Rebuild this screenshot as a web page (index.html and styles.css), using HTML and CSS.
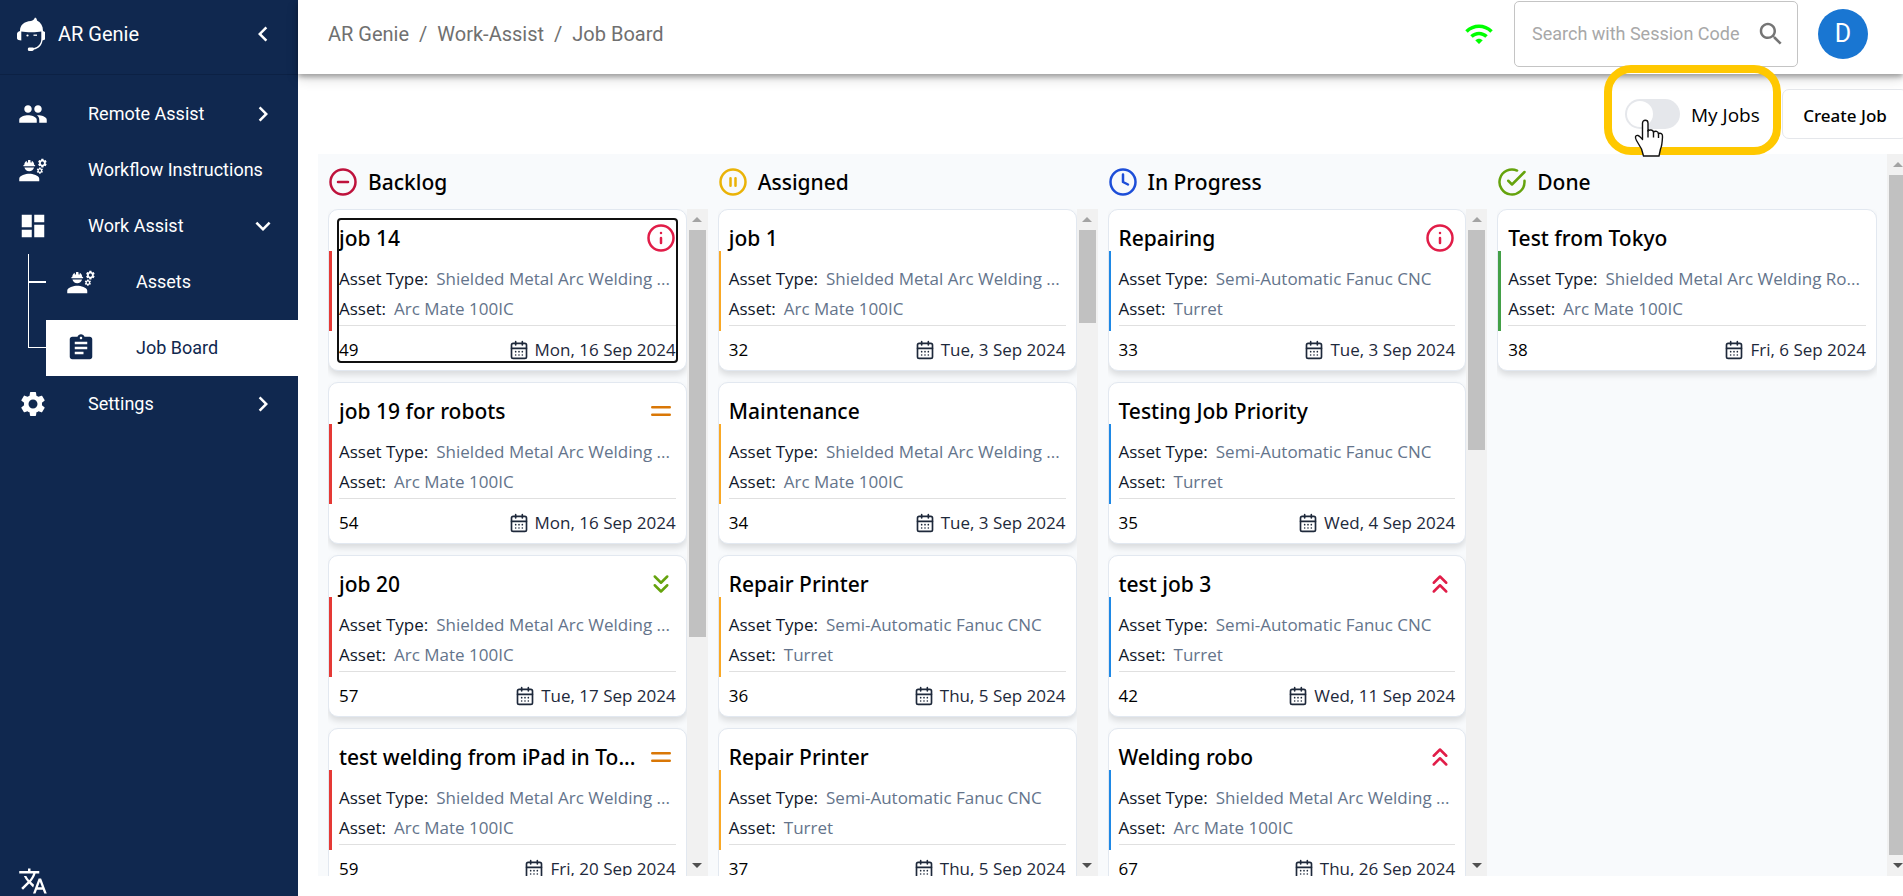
FILE: index.html
```html
<!DOCTYPE html>
<html lang="en">
<head>
<meta charset="utf-8">
<title>AR Genie - Job Board</title>
<link rel="stylesheet" href="styles.css">
</head>
<body>
<svg class="sprite" aria-hidden="true">
  <symbol id="logo" viewBox="0 0 28 34">
    <path fill="currentColor" d="M3 14C3 8 7 4.500 14 4C16 3.500 17.500 2 18 .5C19.500 1 20 2.500 20 3.500C24 5.500 26 9 26 14L28 15V22.500L25.500 23.500C25 28.500 21 32 17 32.500C16.500 34 15.500 34 14 34H12C10.500 34 10.500 30.500 12 30.500H15C16 30.500 16.800 30.700 17 31C21 30 24.200 27 24.300 22V14.500C20 15.500 9 15.500 4.300 14.500V23.500L1.500 23C0 22.500 0 21.500 0 20.500V17C0 15.500 1 14.500 3 14Z"/>
    <circle fill="currentColor" cx="10.500" cy="18.500" r="1.100"/>
    <path stroke="currentColor" stroke-width="1.300" d="M16.500 18.200h3.500"/>
  </symbol>
  <symbol id="people" viewBox="0 0 24 24"><path fill="currentColor" d="M16 11c1.660 0 2.990-1.340 2.990-3S17.660 5 16 5c-1.660 0-3 1.340-3 3s1.340 3 3 3zm-8 0c1.660 0 2.990-1.340 2.990-3S9.660 5 8 5C6.340 5 5 6.340 5 8s1.340 3 3 3zm0 2c-2.330 0-7 1.170-7 3.500V19h14v-2.500c0-2.330-4.670-3.500-7-3.500zm8 0c-.29 0-.62.020-.97.050 1.160.84 1.970 1.970 1.970 3.450V19h6v-2.500c0-2.330-4.670-3.500-7-3.500z"/></symbol>
  <symbol id="engineer" viewBox="0 0 24 24"><path fill="currentColor" d="M9 15c-2.670 0-8 1.340-8 4v2h16v-2c0-2.660-5.330-4-8-4zM22.100 6.840c.01-.11.02-.22.02-.34s-.01-.23-.03-.34l.74-.58c.07-.05.08-.15.04-.22l-.7-1.210c-.04-.08-.14-.1-.21-.08l-.86.35c-.18-.14-.38-.25-.59-.34l-.13-.93c-.02-.09-.09-.15-.18-.15h-1.400c-.09 0-.16.06-.17.15l-.13.93c-.21.09-.41.21-.59.34l-.87-.35c-.08-.03-.17 0-.21.08l-.7 1.210c-.04.08-.03.17.04.22l.74.58c-.02.11-.03.23-.03.34s.01.23.03.34l-.74.58c-.07.05-.08.15-.04.22l.7 1.210c.04.08.14.1.21.08l.87-.35c.18.14.38.25.59.34l.13.93c.01.09.08.15.17.15h1.400c.09 0 .16-.06.17-.15l.13-.93c.21-.09.41-.21.59-.34l.87.35c.08.03.17 0 .21-.08l.7-1.210c.04-.08.03-.17-.04-.22l-.73-.58zm-2.600.91c-.69 0-1.250-.56-1.250-1.250s.56-1.250 1.250-1.250 1.250.56 1.250 1.250-.56 1.250-1.250 1.250zM19.920 11.680l-.5-.87c-.03-.06-.1-.08-.15-.06l-.62.25c-.13-.1-.27-.18-.42-.24l-.09-.66c-.02-.06-.08-.1-.14-.1h-1c-.06 0-.11.04-.12.11l-.09.66c-.15.06-.29.15-.42.24l-.62-.25c-.06-.02-.12 0-.15.06l-.5.87c-.03.06-.02.12.03.16l.53.41c-.01.08-.02.16-.02.24s.01.17.02.24l-.53.41c-.05.04-.06.11-.03.16l.5.87c.03.06.1.08.15.06l.62-.25c.13.1.27.18.42.24l.09.66c.01.07.06.11.12.11h1c.06 0 .12-.04.12-.11l.09-.66c.15-.06.29-.15.42-.24l.62.25c.06.02.12 0 .15-.06l.5-.87c.03-.06.02-.12-.03-.16l-.52-.41c.01-.08.02-.16.02-.24s-.01-.17-.02-.24l.53-.41c.05-.04.06-.11.04-.17zm-2.420 1.650c-.46 0-.83-.38-.83-.83 0-.46.38-.83.83-.83s.83.38.83.83c0 .46-.37.83-.83.83zM4.740 9h8.530c.27 0 .49-.22.49-.49v-.02c0-.27-.22-.49-.49-.49H13c0-1.480-.81-2.750-2-3.450v.95c0 .28-.22.5-.5.5s-.5-.22-.5-.5V4.140C9.680 4.060 9.350 4 9 4s-.68.06-1 .14V5.500c0 .28-.22.5-.5.5S7 5.780 7 5.500v-.95C5.810 5.250 5 6.520 5 8h-.26c-.27 0-.49.22-.49.49v.03c0 .26.22.48.49.48zM9 13c1.860 0 3.410-1.280 3.860-3H5.140c.45 1.720 2 3 3.860 3z"/></symbol>
  <symbol id="dashboard" viewBox="0 0 24 24"><path fill="currentColor" d="M3 13h8V3H3v10zm0 8h8v-6H3v6zm10 0h8V11h-8v10zm0-18v6h8V3h-8z"/></symbol>
  <symbol id="assignment" viewBox="0 0 24 24"><path fill="currentColor" d="M19 3h-4.180C14.400 1.840 13.300 1 12 1c-1.300 0-2.400.84-2.820 2H5c-1.100 0-2 .9-2 2v14c0 1.100.9 2 2 2h14c1.100 0 2-.9 2-2V5c0-1.100-.9-2-2-2zm-7 0c.55 0 1 .45 1 1s-.45 1-1 1-1-.45-1-1 .45-1 1-1zm2 14H7v-2h7v2zm3-4H7v-2h10v2zm0-4H7V7h10v2z"/></symbol>
  <symbol id="gear" viewBox="0 0 24 24"><path fill="currentColor" d="M19.140 12.940c.04-.3.06-.61.06-.94 0-.32-.02-.64-.07-.94l2.030-1.580c.18-.14.23-.41.12-.61l-1.920-3.320c-.12-.22-.37-.29-.59-.22l-2.390.96c-.5-.38-1.030-.7-1.620-.94l-.36-2.540c-.04-.24-.24-.41-.48-.41h-3.840c-.24 0-.43.17-.47.41l-.36 2.540c-.59.24-1.130.57-1.620.94l-2.390-.96c-.22-.08-.47 0-.59.22L2.740 8.870c-.12.21-.08.47.12.61l2.030 1.580c-.05.3-.09.63-.09.94s.02.64.07.94l-2.030 1.580c-.18.14-.23.41-.12.61l1.920 3.320c.12.22.37.29.59.22l2.390-.96c.5.38 1.030.7 1.620.94l.36 2.540c.05.24.24.41.48.41h3.840c.24 0 .44-.17.47-.41l.36-2.540c.59-.24 1.130-.56 1.620-.94l2.390.96c.22.08.47 0 .59-.22l1.920-3.320c.12-.22.07-.47-.12-.61l-2.010-1.580zM12 15.600c-1.980 0-3.600-1.620-3.600-3.600s1.620-3.600 3.600-3.600 3.600 1.620 3.600 3.600-1.620 3.600-3.600 3.600z"/></symbol>
  <symbol id="translate" viewBox="0 0 24 24"><path fill="currentColor" d="M12.870 15.070l-2.540-2.510.03-.03c1.740-1.940 2.980-4.170 3.710-6.530H17V4h-7V2H8v2H1v1.990h11.170C11.500 7.920 10.440 9.750 9 11.350 8.070 10.320 7.300 9.190 6.690 8h-2c.73 1.630 1.730 3.170 2.980 4.560l-5.090 5.020L4 19l5-5 3.110 3.110.76-2.040zM18.500 10h-2L12 22h2l1.120-3h4.750L21 22h2l-4.500-12zm-2.620 7l1.620-4.330L19.120 17h-3.240z"/></symbol>
  <symbol id="left" viewBox="0 0 24 24"><path fill="currentColor" d="M15.410 7.410L14 6l-6 6 6 6 1.410-1.410L10.830 12z"/></symbol>
  <symbol id="right" viewBox="0 0 24 24"><path fill="currentColor" d="M10 6L8.590 7.410 13.170 12l-4.580 4.590L10 18l6-6z"/></symbol>
  <symbol id="down" viewBox="0 0 24 24"><path fill="currentColor" d="M16.590 8.590L12 13.170 7.410 8.590 6 10l6 6 6-6z"/></symbol>
  <symbol id="wifi" viewBox="0 0 24 24"><path fill="currentColor" d="m1 9 2 2c4.970-4.970 13.030-4.970 18 0l2-2C16.930 2.930 7.080 2.930 1 9zm8 8 3 3 3-3c-1.650-1.660-4.340-1.660-6 0zm-4-4 2 2c2.760-2.760 7.240-2.760 10 0l2-2C15.140 9.140 8.870 9.140 5 13z"/></symbol>
  <symbol id="search" viewBox="0 0 24 24"><path fill="currentColor" d="M15.500 14h-.79l-.28-.27C15.410 12.590 16 11.110 16 9.500 16 5.910 13.090 3 9.500 3S3 5.910 3 9.500 5.910 16 9.500 16c1.610 0 3.090-.59 4.230-1.570l.27.28v.79l5 4.990L20.490 19l-4.990-5zm-6 0C7.010 14 5 11.990 5 9.500S7.010 5 9.500 5 14 7.010 14 9.500 11.990 14 9.500 14z"/></symbol>
  <symbol id="minus" viewBox="0 0 24 24"><circle cx="12" cy="12" r="10"/><path d="M8 12h8"/></symbol>
  <symbol id="pause" viewBox="0 0 24 24"><circle cx="12" cy="12" r="10"/><path d="M10 15V9M14 15V9"/></symbol>
  <symbol id="clock" viewBox="0 0 24 24"><circle cx="12" cy="12" r="10"/><path d="M12 6v6l4 2"/></symbol>
  <symbol id="check" viewBox="0 0 24 24"><path d="M22 11.080V12a10 10 0 1 1-5.930-9.140"/><path d="m9 11 3 3L22 4"/></symbol>
  <symbol id="info" viewBox="0 0 24 24"><circle cx="12" cy="12" r="10"/><path d="M12 16v-4M12 8h.01"/></symbol>
  <symbol id="equal" viewBox="0 0 24 24"><path d="M5 9h14M5 15h14"/></symbol>
  <symbol id="lower" viewBox="0 0 24 24"><path d="m7 6 5 5 5-5M7 13l5 5 5-5"/></symbol>
  <symbol id="higher" viewBox="0 0 24 24"><path d="m17 11-5-5-5 5M17 18l-5-5-5 5"/></symbol>
  <symbol id="calendar" viewBox="0 0 24 24"><rect width="18" height="18" x="3" y="4" rx="2"/><path d="M16 2v4M8 2v4M3 10h18M8 14h.01M12 14h.01M16 14h.01M8 18h.01M12 18h.01M16 18h.01"/></symbol>
</svg>

<div class="app">
  <aside class="sidebar">
    <div class="brand">
      <svg class="brand-logo"><use href="#logo"/></svg>
      <span class="brand-name">AR Genie</span>
      <button class="icon-button" type="button" aria-label="Collapse menu"><svg class="icon"><use href="#left"/></svg></button>
    </div>
    <nav class="menu">
      <a class="menu-item" href="#"><svg class="icon"><use href="#people"/></svg><span class="menu-label">Remote Assist</span><svg class="icon"><use href="#right"/></svg></a>
      <a class="menu-item" href="#"><svg class="icon"><use href="#engineer"/></svg><span class="menu-label">Workflow Instructions</span></a>
      <a class="menu-item" href="#"><svg class="icon"><use href="#dashboard"/></svg><span class="menu-label">Work Assist</span><svg class="icon"><use href="#down"/></svg></a>
      <div class="submenu">
        <a class="menu-item sub-item" href="#"><svg class="icon"><use href="#engineer"/></svg><span class="menu-label">Assets</span></a>
        <a class="menu-item sub-item selected" href="#"><svg class="icon"><use href="#assignment"/></svg><span class="menu-label">Job Board</span></a>
      </div>
      <a class="menu-item" href="#"><svg class="icon"><use href="#gear"/></svg><span class="menu-label">Settings</span><svg class="icon"><use href="#right"/></svg></a>
    </nav>
    <button class="icon-button language" type="button" aria-label="Language"><svg class="icon"><use href="#translate"/></svg></button>
  </aside>

  <div class="main">
    <header class="topbar">
      <nav class="crumbs" aria-label="Breadcrumb"><a href="#">AR Genie</a><span>/</span><a href="#">Work-Assist</a><span>/</span><a href="#">Job Board</a></nav>
      <svg class="icon wifi"><use href="#wifi"/></svg>
      <div class="search">
        <input class="search-input" type="text" aria-label="Search with Session Code" placeholder="Search with Session Code">
        <button class="icon-button search-button" type="button" aria-label="Search"><svg class="icon"><use href="#search"/></svg></button>
      </div>
      <button class="avatar" type="button">D</button>
    </header>

    <div class="toolbar">
      <div class="highlight">
        <label class="toggle"><input class="toggle-input" type="checkbox"><span>My Jobs</span></label>
        <svg class="pointer" viewBox="0 0 30 38"><path fill="#fff" stroke="#111" stroke-width="1.400" stroke-linejoin="round" d="M9.500 37L7.500 30L2.500 21.500C.5 18 1.500 16 4 16.500C6 17 7 19 8.500 20.500V4C8.500 .3 14 .3 14 4V12C15.500 10.300 19 10.800 19.500 13C21.500 11.500 24 12.200 24.500 14.500C27 13.500 28.800 15 28.500 18C28.300 22 28 27 26.500 30L25 37Z"/><path fill="none" stroke="#111" stroke-width="1.400" d="M14 11v7.500M19.500 12.500v6M24.500 14v5"/></svg>
      </div>
      <button class="create" type="button">Create Job</button>
    </div>

    <div class="board-area">
      <main class="board">
        <section class="column backlog">
          <h2 class="column-title"><svg class="line-icon"><use href="#minus"/></svg>Backlog</h2>
          <div class="column-body">
            <div class="cards">
              <article class="card"><div class="card-content focused" tabindex="0">
                <div class="card-head"><h3>job 14</h3><svg class="line-icon high"><use href="#info"/></svg></div>
                <dl><div><dt>Asset Type:</dt><dd>Shielded Metal Arc Welding ...</dd></div><div><dt>Asset:</dt><dd>Arc Mate 100IC</dd></div></dl>
                <div class="card-foot"><span>49</span><time><svg class="line-icon cal"><use href="#calendar"/></svg>Mon, 16 Sep 2024</time></div>
              </div></article>
              <article class="card"><div class="card-content">
                <div class="card-head"><h3>job 19 for robots</h3><svg class="line-icon medium"><use href="#equal"/></svg></div>
                <dl><div><dt>Asset Type:</dt><dd>Shielded Metal Arc Welding ...</dd></div><div><dt>Asset:</dt><dd>Arc Mate 100IC</dd></div></dl>
                <div class="card-foot"><span>54</span><time><svg class="line-icon cal"><use href="#calendar"/></svg>Mon, 16 Sep 2024</time></div>
              </div></article>
              <article class="card"><div class="card-content">
                <div class="card-head"><h3>job 20</h3><svg class="line-icon low"><use href="#lower"/></svg></div>
                <dl><div><dt>Asset Type:</dt><dd>Shielded Metal Arc Welding ...</dd></div><div><dt>Asset:</dt><dd>Arc Mate 100IC</dd></div></dl>
                <div class="card-foot"><span>57</span><time><svg class="line-icon cal"><use href="#calendar"/></svg>Tue, 17 Sep 2024</time></div>
              </div></article>
              <article class="card"><div class="card-content">
                <div class="card-head"><h3>test welding from iPad in To...</h3><svg class="line-icon medium"><use href="#equal"/></svg></div>
                <dl><div><dt>Asset Type:</dt><dd>Shielded Metal Arc Welding ...</dd></div><div><dt>Asset:</dt><dd>Arc Mate 100IC</dd></div></dl>
                <div class="card-foot"><span>59</span><time><svg class="line-icon cal"><use href="#calendar"/></svg>Fri, 20 Sep 2024</time></div>
              </div></article>
            </div>
            <div class="scrollbar" aria-hidden="true"><i class="arrow up"></i><i class="thumb" style="flex-basis:61%"></i><i class="arrow dn"></i></div>
          </div>
        </section>

        <section class="column assigned">
          <h2 class="column-title"><svg class="line-icon"><use href="#pause"/></svg>Assigned</h2>
          <div class="column-body">
            <div class="cards">
              <article class="card"><div class="card-content">
                <div class="card-head"><h3>job 1</h3></div>
                <dl><div><dt>Asset Type:</dt><dd>Shielded Metal Arc Welding ...</dd></div><div><dt>Asset:</dt><dd>Arc Mate 100IC</dd></div></dl>
                <div class="card-foot"><span>32</span><time><svg class="line-icon cal"><use href="#calendar"/></svg>Tue, 3 Sep 2024</time></div>
              </div></article>
              <article class="card"><div class="card-content">
                <div class="card-head"><h3>Maintenance</h3></div>
                <dl><div><dt>Asset Type:</dt><dd>Shielded Metal Arc Welding ...</dd></div><div><dt>Asset:</dt><dd>Arc Mate 100IC</dd></div></dl>
                <div class="card-foot"><span>34</span><time><svg class="line-icon cal"><use href="#calendar"/></svg>Tue, 3 Sep 2024</time></div>
              </div></article>
              <article class="card"><div class="card-content">
                <div class="card-head"><h3>Repair Printer</h3></div>
                <dl><div><dt>Asset Type:</dt><dd>Semi-Automatic Fanuc CNC</dd></div><div><dt>Asset:</dt><dd>Turret</dd></div></dl>
                <div class="card-foot"><span>36</span><time><svg class="line-icon cal"><use href="#calendar"/></svg>Thu, 5 Sep 2024</time></div>
              </div></article>
              <article class="card"><div class="card-content">
                <div class="card-head"><h3>Repair Printer</h3></div>
                <dl><div><dt>Asset Type:</dt><dd>Semi-Automatic Fanuc CNC</dd></div><div><dt>Asset:</dt><dd>Turret</dd></div></dl>
                <div class="card-foot"><span>37</span><time><svg class="line-icon cal"><use href="#calendar"/></svg>Thu, 5 Sep 2024</time></div>
              </div></article>
            </div>
            <div class="scrollbar" aria-hidden="true"><i class="arrow up"></i><i class="thumb" style="flex-basis:14%"></i><i class="arrow dn"></i></div>
          </div>
        </section>

        <section class="column progress">
          <h2 class="column-title"><svg class="line-icon"><use href="#clock"/></svg>In Progress</h2>
          <div class="column-body">
            <div class="cards">
              <article class="card"><div class="card-content">
                <div class="card-head"><h3>Repairing</h3><svg class="line-icon high"><use href="#info"/></svg></div>
                <dl><div><dt>Asset Type:</dt><dd>Semi-Automatic Fanuc CNC</dd></div><div><dt>Asset:</dt><dd>Turret</dd></div></dl>
                <div class="card-foot"><span>33</span><time><svg class="line-icon cal"><use href="#calendar"/></svg>Tue, 3 Sep 2024</time></div>
              </div></article>
              <article class="card"><div class="card-content">
                <div class="card-head"><h3>Testing Job Priority</h3></div>
                <dl><div><dt>Asset Type:</dt><dd>Semi-Automatic Fanuc CNC</dd></div><div><dt>Asset:</dt><dd>Turret</dd></div></dl>
                <div class="card-foot"><span>35</span><time><svg class="line-icon cal"><use href="#calendar"/></svg>Wed, 4 Sep 2024</time></div>
              </div></article>
              <article class="card"><div class="card-content">
                <div class="card-head"><h3>test job 3</h3><svg class="line-icon high"><use href="#higher"/></svg></div>
                <dl><div><dt>Asset Type:</dt><dd>Semi-Automatic Fanuc CNC</dd></div><div><dt>Asset:</dt><dd>Turret</dd></div></dl>
                <div class="card-foot"><span>42</span><time><svg class="line-icon cal"><use href="#calendar"/></svg>Wed, 11 Sep 2024</time></div>
              </div></article>
              <article class="card"><div class="card-content">
                <div class="card-head"><h3>Welding robo</h3><svg class="line-icon high"><use href="#higher"/></svg></div>
                <dl><div><dt>Asset Type:</dt><dd>Shielded Metal Arc Welding ...</dd></div><div><dt>Asset:</dt><dd>Arc Mate 100IC</dd></div></dl>
                <div class="card-foot"><span>67</span><time><svg class="line-icon cal"><use href="#calendar"/></svg>Thu, 26 Sep 2024</time></div>
              </div></article>
            </div>
            <div class="scrollbar" aria-hidden="true"><i class="arrow up"></i><i class="thumb" style="flex-basis:33%"></i><i class="arrow dn"></i></div>
          </div>
        </section>

        <section class="column done">
          <h2 class="column-title"><svg class="line-icon"><use href="#check"/></svg>Done</h2>
          <div class="column-body">
            <div class="cards">
              <article class="card"><div class="card-content">
                <div class="card-head"><h3>Test from Tokyo</h3></div>
                <dl><div><dt>Asset Type:</dt><dd>Shielded Metal Arc Welding Ro...</dd></div><div><dt>Asset:</dt><dd>Arc Mate 100IC</dd></div></dl>
                <div class="card-foot"><span>38</span><time><svg class="line-icon cal"><use href="#calendar"/></svg>Fri, 6 Sep 2024</time></div>
              </div></article>
            </div>
          </div>
        </section>
      </main>
      <div class="scrollbar" aria-hidden="true"><i class="arrow up"></i><i class="thumb" style="flex-basis:99%"></i><i class="arrow dn"></i></div>
    </div>
  </div>
</div>
</body>
</html>
```

FILE: styles.css
```css
* { box-sizing: border-box; }

body {
  margin: 0;
  background: #fff;
  color: #000;
  font-family: "Open Sans", "Noto Sans", sans-serif;
  font-size: 17px;
  line-height: 24px;
}

button, input { font: inherit; color: inherit; }
a { color: inherit; text-decoration: none; }
h2, h3, dl, dd { margin: 0; }

.sprite { position: absolute; width: 0; height: 0; }

.icon { width: 30px; height: 30px; flex: none; display: block; }

.icon-button {
  padding: 0;
  border: 0;
  background: none;
  cursor: pointer;
}

.app {
  display: flex;
  height: 100vh;
  overflow: hidden;
}

/* Sidebar */
.sidebar {
  flex: none;
  width: 298px;
  display: flex;
  flex-direction: column;
  background: #10284f;
  color: #fff;
  font-family: Roboto, sans-serif;
  font-size: 18px;
}

.brand {
  display: flex;
  align-items: center;
  height: 75px;
  padding: 0 20px 6px 17px;
  border-bottom: 1px solid #0c2144;
  font-size: 20px;
}
.brand-logo { width: 28px; height: 34px; margin-right: 13px; }
.brand-name { flex: 1; }

.menu { padding-top: 11px; }
.menu-item {
  display: flex;
  align-items: center;
  height: 56px;
  padding: 0 20px 0 18px;
}
.menu-label { flex: 1; margin-left: 40px; white-space: nowrap; }

.submenu { position: relative; padding-left: 46px; }
.submenu::before {
  content: "";
  position: absolute;
  left: 28px;
  top: 0;
  bottom: 28px;
  width: 18px;
  border-left: 1px solid #fff;
  border-bottom: 1px solid #fff;
}
.sub-item { position: relative; padding-left: 20px; }
.sub-item:first-child::before {
  content: "";
  position: absolute;
  left: -18px;
  top: 27px;
  width: 18px;
  height: 2px;
  background: #fff;
}
.selected { margin-top: 10px; background: #fff; color: #10284f; }
.language { margin: auto 0 0 18px; }

/* Top bar */
.main {
  flex: 1;
  min-width: 0;
  display: flex;
  flex-direction: column;
}
.topbar {
  flex: none;
  display: flex;
  align-items: center;
  height: 74px;
  padding: 0 35px 6px 30px;
  box-shadow: 0 3px 5px rgba(0, 0, 0, .3), 0 5px 12px rgba(0, 0, 0, .14);
  font-family: Roboto, sans-serif;
  font-size: 20px;
}
.crumbs { flex: 1; display: flex; gap: 10px; color: #707070; }
.wifi { color: #0f0; margin-right: 20px; }
.search {
  display: flex;
  align-items: center;
  width: 284px;
  height: 66px;
  margin-right: 20px;
  padding: 0 11px 0 17px;
  border: 1px solid #c4c4c4;
  border-radius: 5px;
}
.search-input {
  flex: 1;
  min-width: 0;
  padding: 0;
  border: 0;
  outline: 0;
  background: none;
  font-size: 18px;
}
.search-input::placeholder { color: #a8a8a8; opacity: 1; }
.search-button { color: #757575; }
.avatar {
  width: 50px;
  height: 50px;
  padding: 0;
  border: 0;
  border-radius: 50%;
  background: #1976d2;
  color: #fff;
  font-size: 25px;
}

/* Toolbar */
.toolbar {
  flex: none;
  display: flex;
  align-items: center;
  justify-content: flex-end;
  height: 80px;
}
.highlight {
  position: relative;
  z-index: 2;
  width: 177px;
  height: 90px;
  display: flex;
  align-items: center;
  padding-left: 13px;
  border: 8px solid #ffc800;
  border-radius: 27px;
  margin: -8px 1px 0 0;
}
.toggle {
  display: flex;
  align-items: center;
  gap: 11px;
  padding-top: 8px;
  font-size: 19px;
  white-space: nowrap;
}
.toggle span { padding-top: 2px; }
.toggle-input {
  appearance: none;
  width: 55px;
  height: 30px;
  margin: 0;
  padding: 2px;
  border-radius: 15px;
  background: #e5e7eb;
}
.toggle-input::before {
  content: "";
  display: block;
  width: 26px;
  height: 26px;
  border-radius: 50%;
  background: #fff;
}
.toggle-input:checked::before { margin-left: 25px; }
.pointer {
  position: absolute;
  left: 22px;
  top: 46px;
  width: 30px;
  height: 38px;
}
.create {
  flex: none;
  width: 126px;
  height: 50px;
  margin-right: -5px;
  padding: 3px 0 0;
  border: 1px solid #e5e7eb;
  border-radius: 7px;
  background: #fff;
  font-family: "Noto Sans", sans-serif;
  font-weight: 500;
  font-size: 17px;
}

/* Board */
.board-area {
  flex: 1;
  min-height: 0;
  display: flex;
  margin: 0 -5px 20px 20px;
}
.board {
  flex: 1;
  min-width: 0;
  display: grid;
  grid-template-columns: repeat(4, minmax(0, 1fr));
  gap: 10px;
  padding: 0 10px;
  background: #f8fafc;
}
.column { display: flex; flex-direction: column; min-height: 0; }
.column-title {
  flex: none;
  display: flex;
  align-items: center;
  gap: 10px;
  height: 55px;
}
.column-title, .card h3 {
  font-family: "Noto Sans", sans-serif;
  font-size: 21px;
  font-weight: 500;
}
.column-body { flex: 1; min-height: 0; display: flex; }
.cards { flex: 1; min-width: 0; overflow: hidden; }

.line-icon {
  flex: none;
  width: 30px;
  height: 30px;
  fill: none;
  stroke: currentColor;
  stroke-width: 2;
  stroke-linecap: round;
  stroke-linejoin: round;
}
.backlog .column-title svg { color: #be123c; }
.assigned .column-title svg { color: #eab308; }
.progress .column-title svg { color: #1d4ed8; }
.done .column-title svg { color: #65a30d; }
.high { color: #e11d48; }
.medium { color: #d97706; }
.low { color: #65a30d; }

.card {
  position: relative;
  margin-bottom: 11px;
  padding: 9px 9px 8px;
  border: 1px solid #e2e8f0;
  border-radius: 10px;
  background: #fff;
  box-shadow: 0 4px 6px rgba(0, 0, 0, .12);
}
.card::before {
  content: "";
  position: absolute;
  left: 0;
  top: 41px;
  width: 3px;
  height: 80px;
}
.backlog .card::before { background: #e53935; }
.assigned .card::before { background: #f9a825; width: 2px; }
.progress .card::before { background: #1e88e5; width: 2px; }
.done .card::before { background: #43a047; }

.card-content { padding: 0 1px; border-radius: 3px; }
.focused { outline: 2px solid #101010; outline-offset: -1px; }
.card-head {
  display: flex;
  align-items: center;
  justify-content: space-between;
  height: 38px;
}
.card h3 { white-space: nowrap; }
.card dl {
  padding: 7px 0 1px;
  border-bottom: 1px solid #e0e0e0;
}
.card dl div {
  display: flex;
  gap: 8px;
  height: 30px;
  align-items: center;
  white-space: nowrap;
}
.card dt { color: #0f172a; }
.card dd { color: #64748b; }
.card-foot {
  display: flex;
  justify-content: space-between;
  align-items: center;
  padding-top: 12px;
}
.card-foot time { display: flex; align-items: center; gap: 6px; color: #1e293b; }
.cal { width: 20px; height: 20px; }

/* Scrollbars */
.scrollbar {
  flex: none;
  display: flex;
  flex-direction: column;
  width: 21px;
  background: #f1f1f1;
}
.arrow {
  flex: none;
  height: 21px;
  display: flex;
  align-items: center;
  justify-content: center;
}
.arrow::before {
  content: "";
  border: 5px solid transparent;
}
.up::before { border-top-width: 0; border-bottom-color: #a3a3a3; }
.dn { margin-top: auto; }
.dn::before { border-bottom-width: 0; border-top-color: #505050; }
.thumb {
  flex-grow: 0;
  flex-shrink: 1;
  margin: 0 2px;
  min-height: 0;
  background: #c1c1c1;
}
```
